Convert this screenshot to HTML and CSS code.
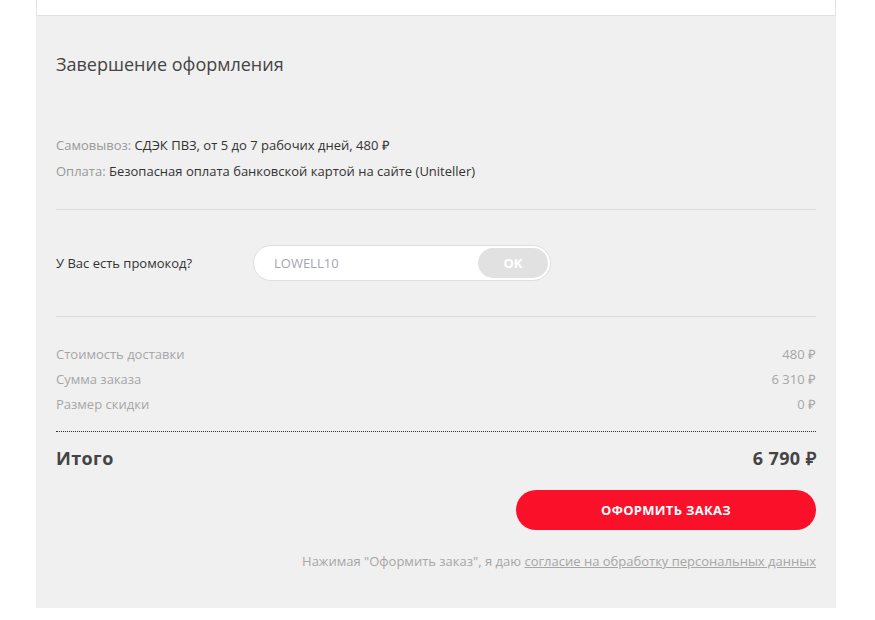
FILE: index.html
```html
<!DOCTYPE html>
<html lang="ru">
<head>
<meta charset="utf-8">
<title>Завершение оформления</title>
<link rel="stylesheet" href="styles.css">
</head>
<body>
<div class="wrap">
  <div class="top-box"></div>
  <section class="checkout">
    <h2 class="title">Завершение оформления</h2>
    <div class="info">
      <p class="info-line"><span class="muted">Самовывоз:</span> СДЭК ПВЗ, от 5 до 7 рабочих дней, 480 ₽</p>
      <p class="info-line"><span class="muted">Оплата:</span> Безопасная оплата банковской картой на сайте (Uniteller)</p>
    </div>
    <div class="promo">
      <span class="promo-label">У Вас есть промокод?</span>
      <div class="promo-field">
        <span class="promo-value">LOWELL10</span>
        <span class="promo-ok">OK</span>
      </div>
    </div>
    <div class="costs">
      <div class="cost-row"><span>Стоимость доставки</span><span>480 ₽</span></div>
      <div class="cost-row"><span>Сумма заказа</span><span>6 310 ₽</span></div>
      <div class="cost-row"><span>Размер скидки</span><span>0 ₽</span></div>
    </div>
    <div class="total">
      <span>Итого</span>
      <span>6 790 ₽</span>
    </div>
    <div class="actions">
      <button class="submit">Оформить заказ</button>
    </div>
    <p class="consent">Нажимая "Оформить заказ", я даю <a href="#">согласие на обработку персональных данных</a></p>
  </section>
</div>
</body>
</html>
```

FILE: styles.css
```css
html, body {
  margin: 0;
  padding: 0;
  background: #fff;
}
body {
  font-family: "Open Sans", "Liberation Sans", sans-serif;
  font-size: 13px;
  color: #333;
}
.wrap {
  width: 800px;
  margin-left: 36px;
}
.top-box {
  height: 15px;
  background: #fff;
  border: 1px solid #e2e2e2;
  border-top: none;
  width: 798px;
}
.checkout {
  background: #f0f0f0;
  padding: 36px 20px 37px;
}
.title {
  margin: 0;
  font-size: 18px;
  font-weight: 400;
  line-height: 24px;
  color: #444;
}
.info {
  margin-top: 59px;
  padding-bottom: 28px;
  border-bottom: 1px solid #dcdcdc;
}
.info-line {
  margin: 0;
  line-height: 20px;
}
.info-line + .info-line {
  margin-top: 6px;
}
.muted {
  color: #999;
}
.promo {
  display: flex;
  align-items: center;
  padding: 35px 0 35px;
  border-bottom: 1px solid #dcdcdc;
}
.promo-label {
  width: 197px;
  color: #333;
}
.promo-field {
  width: 298px;
  height: 36px;
  box-sizing: border-box;
  border: 1px solid #dedede;
  border-radius: 18px;
  background: #fff;
  display: flex;
  align-items: center;
  justify-content: space-between;
  padding: 0 2px 0 20px;
}
.promo-value {
  color: #a3a6ad;
}
.promo-ok {
  width: 70px;
  height: 30px;
  border-radius: 15px;
  background: #e1e1e1;
  color: #fff;
  font-weight: 700;
  display: flex;
  align-items: center;
  justify-content: center;
}
.costs {
  padding: 27px 0 17px;
  border-bottom: 1px dotted #333;
}
.cost-row {
  display: flex;
  justify-content: space-between;
  line-height: 20px;
  color: #a6a6a6;
}
.cost-row + .cost-row {
  margin-top: 5px;
}
.total {
  display: flex;
  justify-content: space-between;
  margin-top: 14px;
  font-size: 18px;
  font-weight: 700;
  line-height: 24px;
  color: #444;
  letter-spacing: 0.4px;
}
.actions {
  display: flex;
  justify-content: flex-end;
  margin-top: 20px;
}
.submit {
  width: 300px;
  height: 40px;
  border: none;
  border-radius: 20px;
  background: #fa1029;
  color: #fff;
  font-family: inherit;
  font-size: 13px;
  font-weight: 700;
  text-transform: uppercase;
  letter-spacing: 0.3px;
  cursor: pointer;
}
.consent {
  margin: 21px 0 0;
  text-align: right;
  line-height: 20px;
  color: #a6a6a6;
}
.consent a {
  color: #a6a6a6;
  text-decoration: underline;
}
```
